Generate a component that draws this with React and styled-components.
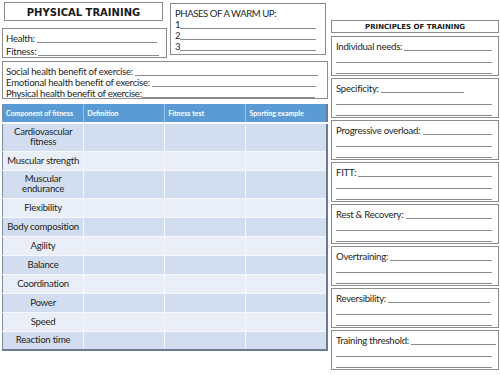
import React from "react";
import styled, { createGlobalStyle } from "styled-components";

const Global = createGlobalStyle`
  body {
    margin: 0;
    background: #ffffff;
    font-family: "Lato", "Liberation Sans", sans-serif;
    color: #1e1e1e;
  }
`;

const components = [
  { lines: ["Cardiovascular", "fitness"] },
  { lines: ["Muscular strength"] },
  { lines: ["Muscular", "endurance"] },
  { lines: ["Flexibility"] },
  { lines: ["Body composition"] },
  { lines: ["Agility"] },
  { lines: ["Balance"] },
  { lines: ["Coordination"] },
  { lines: ["Power"] },
  { lines: ["Speed"] },
  { lines: ["Reaction time"] },
];

const principles = [
  { label: "Individual needs:" },
  { label: "Specificity:", short: 34 },
  { label: "Progressive overload:" },
  { label: "FITT:" },
  { label: "Rest & Recovery:" },
  { label: "Overtraining:" },
  { label: "Reversibility:", short: 8 },
  { label: "Training threshold:", short: 2 },
];

const App = () => {
  return (
    <Page>
      <Global />
      <LeftCol>
        <TopRow>
          <TitleStack>
            <TitleBox>PHYSICAL TRAINING</TitleBox>
            <HealthBox>
              <Line tall>
                Health: <Fill right={9} />
              </Line>
              <Line tall>
                Fitness: <Fill right={7} />
              </Line>
            </HealthBox>
          </TitleStack>
          <PhasesBox>
            <Line caps>PHASES OF A WARM UP:</Line>
            <Line>
              1<Fill right={9} />
            </Line>
            <Line>
              2<Fill right={9} />
            </Line>
            <Line>
              3<Fill right={9} />
            </Line>
          </PhasesBox>
        </TopRow>
        <BenefitBox>
          <Line>
            Social health benefit of exercise: <Fill right={9} />
          </Line>
          <Line>
            Emotional health benefit of exercise: <Fill right={11} />
          </Line>
          <Line>
            Physical health benefit of exercise:<Fill right={12} />
          </Line>
        </BenefitBox>
        <Table>
          <thead>
            <tr>
              <Th>Component of fitness</Th>
              <Th>Definition</Th>
              <Th>Fitness test</Th>
              <Th>Sporting example</Th>
            </tr>
          </thead>
          <tbody>
            {components.map((c, i) => (
              <Row key={c.lines[0]} odd={i % 2 === 0} tall={c.lines.length > 1}>
                <NameCell>
                  {c.lines.map((l) => (
                    <div key={l}>{l}</div>
                  ))}
                </NameCell>
                <td />
                <td />
                <td />
              </Row>
            ))}
          </tbody>
        </Table>
      </LeftCol>
      <RightCol>
        <PrinciplesTitle>PRINCIPLES OF TRAINING</PrinciplesTitle>
        {principles.map((p) => (
          <PrincipleBox key={p.label}>
            <Line>
              {p.label}&nbsp;<Fill right={p.short || 6} />
            </Line>
            <Line>
              <Fill right={6} />
            </Line>
            <Line>
              <Fill right={6} />
            </Line>
          </PrincipleBox>
        ))}
      </RightCol>
    </Page>
  );
};

export default App;

const Page = styled.div`
  width: 500px;
  height: 375px;
  display: flex;
  padding-left: 2px;
  box-sizing: border-box;
  overflow: hidden;
`;

const LeftCol = styled.div`
  width: 326px;
  display: flex;
  flex-direction: column;
`;

const TopRow = styled.div`
  display: flex;
  height: 58px;
`;

const TitleStack = styled.div`
  width: 165px;
  display: flex;
  flex-direction: column;
`;

const Box = styled.div`
  border: 1px solid #8c8c8c;
  box-sizing: border-box;
  background: #fff;
  font-size: 9.6px;
  letter-spacing: -0.25px;
`;

const TitleBox = styled(Box)`
  margin: 2px 0 0 2px;
  width: 159px;
  height: 19px;
  display: flex;
  align-items: center;
  justify-content: center;
  font-family: "DejaVu Sans", sans-serif;
  font-weight: bold;
  font-size: 10px;
  letter-spacing: 0;
  color: #1a1a1a;
  padding-top: 1px;
`;

const HealthBox = styled(Box)`
  margin-top: 7px;
  height: 30px;
  padding: 2px 0 0 3px;
`;

const PhasesBox = styled(Box)`
  margin: 3px 0 0 3px;
  width: 156px;
  height: 52px;
  padding: 4px 0 0 4px;
`;

const BenefitBox = styled(Box)`
  margin-top: 3px;
  height: 38px;
  padding: 4px 0 0 3px;
`;

const Line = styled.div`
  display: flex;
  align-items: flex-end;
  height: ${(p) => (p.tall ? 13 : 11)}px;
  line-height: 11px;
  white-space: pre;
  letter-spacing: ${(p) => (p.caps ? "-0.45px" : "inherit")};
`;

const Fill = styled.span`
  flex: 1;
  height: 0;
  border-bottom: 1px solid #8a8a8a;
  margin-bottom: 1px;
  margin-right: ${(p) => p.right || 0}px;
`;

const Table = styled.table`
  margin-top: 5px;
  width: 326px;
  border-collapse: collapse;
  table-layout: fixed;
  border-left: 1px solid #7d8ea6;
  border-right: 2px solid #6a7a90;
  border-bottom: 2px solid #6a7a90;
  font-size: 9.6px;
  letter-spacing: -0.25px;
`;

const Th = styled.th`
  background: #5b9bd5;
  color: #fff;
  font-size: 7px;
  letter-spacing: 0;
  font-weight: bold;
  text-align: left;
  padding: 0 3px;
  height: 18px;
  border-right: 1px solid #9cc3e8;
  border-bottom: 2px solid #fff;
  vertical-align: middle;
  &:last-child {
    border-right: none;
  }
`;

const Row = styled.tr`
  height: ${(p) => (p.tall ? 28 : 19)}px;
  background: ${(p) => (p.odd ? "#d2deef" : "#eaeff7")};
  td {
    border-right: 1px solid #f4f7fb;
    border-bottom: 1px solid #f4f7fb;
    padding: 0;
  }
  td:last-child {
    border-right: none;
  }
  &:last-child td {
    border-bottom: none;
  }
`;

const NameCell = styled.td`
  text-align: center;
  line-height: 10px;
  color: #1e1e1e;
  white-space: nowrap;
`;

const RightCol = styled.div`
  width: 168px;
  margin-left: 3px;
  display: flex;
  flex-direction: column;
  gap: 2px;
`;

const PrinciplesTitle = styled(Box)`
  margin-top: 20px;
  margin-bottom: 1px;
  height: 13px;
  display: flex;
  align-items: center;
  justify-content: center;
  font-family: "DejaVu Sans", sans-serif;
  font-weight: bold;
  font-size: 7px;
  letter-spacing: 0;
  color: #1a1a1a;
`;

const PrincipleBox = styled(Box)`
  height: 40px;
  padding: 4px 0 0 4px;
  display: flex;
  flex-direction: column;
  gap: 1.5px;
`;
